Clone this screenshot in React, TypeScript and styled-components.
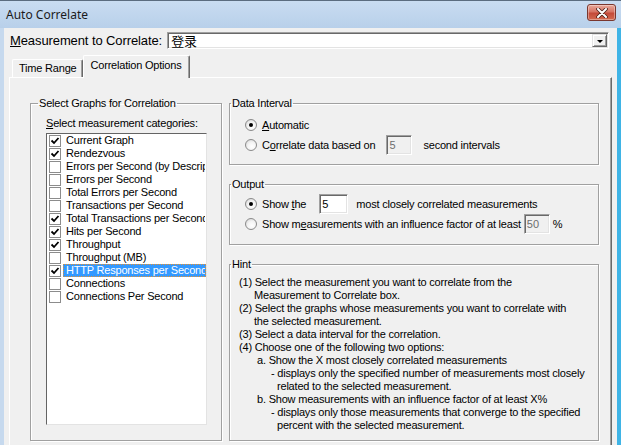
import React from 'react';
import styled, { createGlobalStyle } from 'styled-components';

const GlobalStyle = createGlobalStyle`
  html, body {
    margin: 0;
    padding: 0;
    background: #f0f0f0;
  }
  body {
    font-family: "Liberation Sans", Arial, sans-serif;
    font-size: 11px;
    letter-spacing: -0.2px;
    color: #000;
  }
  * {
    box-sizing: border-box;
  }
`;

const categories = [
  { name: 'Current Graph', checked: true },
  { name: 'Rendezvous', checked: true },
  { name: 'Errors per Second (by Description)', checked: false },
  { name: 'Errors per Second', checked: false },
  { name: 'Total Errors per Second', checked: false },
  { name: 'Transactions per Second', checked: false },
  { name: 'Total Transactions per Second', checked: true },
  { name: 'Hits per Second', checked: true },
  { name: 'Throughput', checked: true },
  { name: 'Throughput (MB)', checked: false },
  { name: 'HTTP Responses per Second', checked: true, selected: true },
  { name: 'Connections', checked: false },
  { name: 'Connections Per Second', checked: false },
];

const hintLines: [number, string][] = [
  [0, '(1) Select the measurement you want to correlate from the'],
  [15, 'Measurement to Correlate box.'],
  [0, '(2) Select the graphs whose measurements you want to correlate with'],
  [15, 'the selected measurement.'],
  [0, '(3) Select a data interval for the correlation.'],
  [0, '(4) Choose one of the following two options:'],
  [18, 'a. Show the X most closely correlated measurements'],
  [32, '- displays only the specified number of measurements most closely'],
  [38, 'related to the selected measurement.'],
  [18, 'b. Show measurements with an influence factor of at least X%'],
  [32, '- displays only those measurements that converge to the specified'],
  [38, 'percent with the selected measurement.'],
];

const CheckMark = () => (
  <svg width="10" height="10" viewBox="0 0 10 10">
    <path d="M1.5 4.5 L4 7 L8.5 2" fill="none" stroke="#000" strokeWidth="1.8" />
  </svg>
);

const CloseGlyph = () => (
  <svg width="12" height="10" viewBox="0 0 12 10">
    <path d="M2 1 L10 9 M10 1 L2 9" stroke="#4a2018" strokeWidth="3.6" strokeLinecap="round" />
    <path d="M2 1 L10 9 M10 1 L2 9" stroke="#fff" strokeWidth="2" strokeLinecap="round" />
  </svg>
);

const App = () => {
  return (
    <>
      <GlobalStyle />
      <Window>
        <TitleBar>
          <Title>Auto Correlate</Title>
          <CloseButton>
            <CloseGlyph />
          </CloseButton>
        </TitleBar>

        <Client>
          <MeasurementRow>
            <MeasurementLabel>
              <u>M</u>easurement to Correlate:
            </MeasurementLabel>
            <Combo>
              <ComboText>登录</ComboText>
              <ComboButton>
                <Arrow />
              </ComboButton>
            </Combo>
          </MeasurementRow>

          <TabStrip>
            <Tab>Time Range</Tab>
            <Tab $active>Correlation Options</Tab>
          </TabStrip>

          <Panel>
            <Group $height={344} $padding="7px 14px 0 15px">
              <Legend $inset={-8}>Select Graphs for Correlation</Legend>
              <FieldLabel>
                <u>S</u>elect measurement categories:
              </FieldLabel>
              <ListBox>
                {categories.map(item => (
                  <ListRow key={item.name}>
                    <CheckBox>{item.checked && <CheckMark />}</CheckBox>
                    <ItemText $selected={!!item.selected}>{item.name}</ItemText>
                  </ListRow>
                ))}
              </ListBox>
            </Group>

            <RightColumn>
              <Group $height={68} $padding="5px 10px 0 15px">
                <Legend $inset={-14}>Data Interval</Legend>
                <OptionRow>
                  <Radio $checked />
                  <OptionText>
                    <u>A</u>utomatic
                  </OptionText>
                </OptionRow>
                <OptionRow>
                  <Radio />
                  <OptionText>
                    C<u>o</u>rrelate data based on
                  </OptionText>
                  <NumberBox $width={26} $disabled $gapLeft={11} readOnly value="5" />
                  <OptionText $gapLeft={11}>second intervals</OptionText>
                </OptionRow>
              </Group>

              <Group $height={67} $padding="3px 10px 0 15px">
                <Legend $inset={-14}>Output</Legend>
                <OptionRow>
                  <Radio $checked />
                  <OptionText>
                    Show <u>t</u>he
                  </OptionText>
                  <NumberBox $width={29} $gapLeft={13} readOnly value="5" />
                  <OptionText $gapLeft={8}>most closely correlated measurements</OptionText>
                </OptionRow>
                <OptionRow>
                  <Radio />
                  <OptionText>
                    Show m<u>e</u>asurements with an influence factor of at least
                  </OptionText>
                  <NumberBox $width={26} $disabled $gapLeft={3} readOnly value="50" />
                  <OptionText $gapLeft={3}>%</OptionText>
                </OptionRow>
              </Group>

              <Group $height={183} $padding="5px 10px 0 9px">
                <Legend $inset={-8}>Hint</Legend>
                {hintLines.map(([indent, text]) => (
                  <HintLine key={text} $indent={indent}>
                    {text}
                  </HintLine>
                ))}
              </Group>
            </RightColumn>
          </Panel>
        </Client>
      </Window>
    </>
  );
};

const Window = styled.div`
  width: 621px;
  height: 445px;
  overflow: hidden;
  display: flex;
  flex-direction: column;
  border-top: 1px solid #5b6c7f;
  background: #c3d7ed;
`;

const TitleBar = styled.div`
  height: 27px;
  flex: none;
  display: flex;
  align-items: center;
  justify-content: space-between;
  padding: 0 5px 0 6px;
  background: linear-gradient(#c9dcf1, #b8d0ea);
`;

const Title = styled.span`
  font-family: "Noto Sans", "Liberation Sans", sans-serif;
  font-size: 12px;
  letter-spacing: 0;
  color: #1b1b1b;
  margin-top: -1px;
`;

const CloseButton = styled.div`
  width: 29px;
  height: 17px;
  margin-top: -4px;
  display: flex;
  align-items: center;
  justify-content: center;
  border: 1px solid #7a372e;
  border-radius: 3px;
  background: linear-gradient(#e8a99b 0%, #d67464 45%, #c44a39 55%, #d26a50 100%);
  box-shadow: inset 0 0 0 1px rgba(255, 255, 255, 0.35);
`;

const Client = styled.div`
  flex: 1;
  min-height: 0;
  display: flex;
  flex-direction: column;
  background: #f0f0f0;
  border-left: 4px solid #c6d9ee;
  border-right: 4px solid #3fb4e6;
`;

const MeasurementRow = styled.div`
  display: flex;
  align-items: center;
  padding: 4px 8px 0 6px;
`;

const MeasurementLabel = styled.span`
  flex: none;
  font-size: 13px;
  letter-spacing: -0.1px;
  margin-right: 5px;
`;

const Combo = styled.div`
  flex: 1;
  height: 17px;
  display: flex;
  align-items: center;
  background: #fff;
  border: 1px solid;
  border-color: #a0a0a0 #fff #fff #a0a0a0;
  box-shadow: inset 1px 1px 0 #696969, inset -1px -1px 0 #e3e3e3;
  padding: 0 1px 0 3px;
`;

const ComboText = styled.span`
  flex: 1;
  font-family: "Noto Sans CJK SC", "Liberation Sans", sans-serif;
  font-size: 13px;
  line-height: 15px;
`;

const ComboButton = styled.div`
  width: 15px;
  height: 13px;
  display: flex;
  align-items: center;
  justify-content: center;
  background: #f0f0f0;
  border: 1px solid;
  border-color: #e3e3e3 #696969 #696969 #e3e3e3;
  box-shadow: inset 1px 1px 0 #fff, inset -1px -1px 0 #a0a0a0;
`;

const Arrow = styled.span`
  width: 0;
  height: 0;
  border-left: 3px solid transparent;
  border-right: 3px solid transparent;
  border-top: 3px solid #000;
  margin-top: 1px;
`;

const TabStrip = styled.div`
  height: 22px;
  margin-top: 6px;
  padding-left: 8px;
  display: flex;
  align-items: flex-end;
  flex: none;
`;

const Tab = styled.div<{ $active?: boolean }>`
  height: ${p => (p.$active ? 23 : 18)}px;
  margin-bottom: ${p => (p.$active ? -1 : 0)}px;
  position: relative;
  z-index: ${p => (p.$active ? 1 : 0)};
  padding: ${p => (p.$active ? '3px 8px 0 7px' : '2px 5px 0 6px')};
  background: #f0f0f0;
  border-top: 1px solid #fff;
  border-left: 1px solid #fff;
  border-right: 1px solid #696969;
  box-shadow: inset -1px 0 0 #a0a0a0;
  border-radius: 2px 2px 0 0;
  line-height: 13px;
  white-space: nowrap;
`;

const Panel = styled.div`
  flex: 1;
  min-height: 0;
  margin: 0 5px;
  border-top: 1px solid #fff;
  border-left: 1px solid #fff;
  border-right: 1px solid #696969;
  box-shadow: inset -1px 0 0 #a0a0a0;
  padding: 19px 0 0 20px;
  display: grid;
  grid-template-columns: 192px 370px;
  column-gap: 7px;
  align-items: start;
`;

const RightColumn = styled.div`
  display: flex;
  flex-direction: column;
  gap: 13px;
`;

const Group = styled.fieldset<{ $height: number; $padding: string }>`
  margin: 0;
  min-width: 0;
  height: ${p => p.$height}px;
  padding: ${p => p.$padding};
  border: 1px solid #a0a0a0;
  box-shadow: 1px 1px 0 #fff, inset 1px 1px 0 #fff;
`;

const Legend = styled.legend<{ $inset: number }>`
  margin-left: ${p => p.$inset}px;
  padding: 0 1px;
  line-height: 13px;
`;

const FieldLabel = styled.div`
  line-height: 13px;
  margin-bottom: 3px;
`;

const ListBox = styled.div`
  height: 292px;
  background: #fff;
  border: 1px solid;
  border-color: #646464 #e3e3e3 #e3e3e3 #646464;
  overflow: hidden;
`;

const ListRow = styled.div`
  height: 13px;
  display: flex;
  align-items: center;
  white-space: nowrap;
`;

const CheckBox = styled.span`
  flex: none;
  width: 12px;
  height: 12px;
  margin-left: 2px;
  border: 1px solid #8c8c8c;
  background: #fff;
  display: flex;
  align-items: center;
  justify-content: center;
`;

const ItemText = styled.span<{ $selected: boolean }>`
  flex: 1;
  min-width: 0;
  overflow: hidden;
  margin-left: 2px;
  height: 13px;
  line-height: 11px;
  padding: 0 0 0 2px;
  color: ${p => (p.$selected ? '#fff' : '#000')};
  background: ${p => (p.$selected ? '#3399ff' : 'transparent')};
  border: 1px ${p => (p.$selected ? 'dotted #e8912e' : 'solid transparent')};
`;

const OptionRow = styled.div`
  height: 20px;
  display: flex;
  align-items: center;
  white-space: nowrap;
`;

const Radio = styled.span<{ $checked?: boolean }>`
  flex: none;
  width: 12px;
  height: 12px;
  border-radius: 50%;
  border: 1px solid #8a8a8a;
  background: radial-gradient(circle at 60% 65%, #fff 0%, #f4f4f4 45%, #cfcfcf 100%);
  display: flex;
  align-items: center;
  justify-content: center;

  &::after {
    content: '';
    width: 4px;
    height: 4px;
    border-radius: 50%;
    background: ${p => (p.$checked ? '#000' : 'transparent')};
  }
`;

const OptionText = styled.span<{ $gapLeft?: number }>`
  margin-left: ${p => p.$gapLeft ?? 5}px;
  line-height: 13px;
`;

const NumberBox = styled.input<{ $width: number; $disabled?: boolean; $gapLeft: number }>`
  width: ${p => p.$width}px;
  height: 20px;
  margin: 0 0 0 ${p => p.$gapLeft}px;
  padding: 0 0 0 2px;
  font: inherit;
  letter-spacing: 0;
  color: ${p => (p.$disabled ? '#6d6d6d' : '#000')};
  background: ${p => (p.$disabled ? '#f0f0f0' : '#fff')};
  border: 1px solid;
  border-color: #a0a0a0 #fff #fff #a0a0a0;
  box-shadow: inset 1px 1px 0 #696969, inset -1px -1px 0 #e3e3e3;
  outline: none;
`;

const HintLine = styled.div<{ $indent: number }>`
  line-height: 13px;
  padding-left: ${p => p.$indent}px;
  white-space: nowrap;
`;

export default App;
